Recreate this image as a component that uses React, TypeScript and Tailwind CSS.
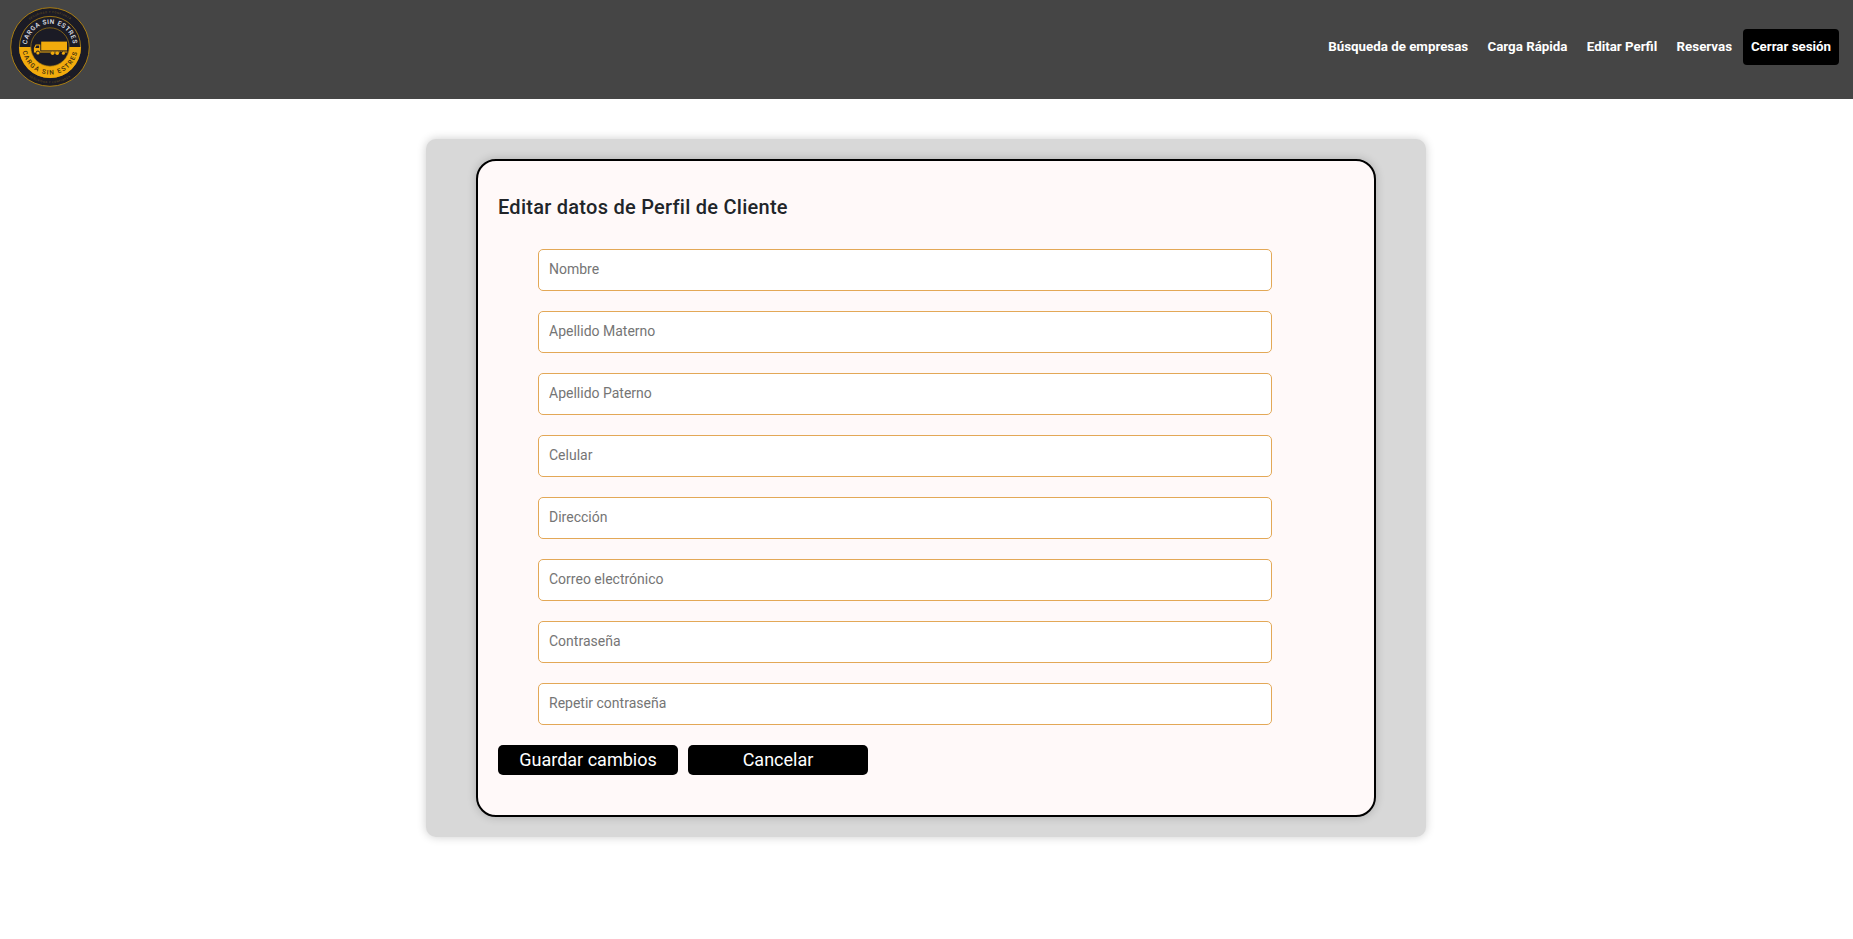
const fields = [
  { label: 'Nombre', type: 'text' },
  { label: 'Apellido Materno', type: 'text' },
  { label: 'Apellido Paterno', type: 'text' },
  { label: 'Celular', type: 'text' },
  { label: 'Dirección', type: 'text' },
  { label: 'Correo electrónico', type: 'email' },
  { label: 'Contraseña', type: 'password' },
  { label: 'Repetir contraseña', type: 'password' },
];

const links = ['Búsqueda de empresas', 'Carga Rápida', 'Editar Perfil', 'Reservas'];

function Logo() {
  return (
    <svg width="80" height="80" viewBox="0 0 80 80" className="block font-['Roboto',sans-serif]">
      <defs>
        <path id="top" d="M 16.8 40 A 23.2 23.2 0 0 1 63.2 40" />
        <path id="bottom" d="M 12.4 40 A 27.6 27.6 0 0 0 67.6 40" />
        <path id="rimTop" d="M 6 40 A 34 34 0 0 1 74 40" />
        <path id="rimBottom" d="M 3.8 40 A 36.2 36.2 0 0 0 76.2 40" />
      </defs>
      <circle cx="40" cy="40" r="39.3" fill="#1b1b25" stroke="#a87c12" strokeWidth="1" />
      <circle cx="40" cy="40" r="30.6" fill="#1b1b25" stroke="#b98a14" strokeWidth="0.8" />
      <path d="M 9 40 A 31 31 0 0 0 71 40 Z" fill="#f2ab0c" />
      <circle cx="40" cy="40" r="19.2" fill="#1b1b25" stroke="#a87c12" strokeWidth="0.7" />
      <g fill="#f2ab0c">
        <rect x="31.2" y="34.6" width="25.8" height="8.8" />
        <path d="M30.3 37.5h-4.6l-1.8 3.6v4.4h2a2 2 0 0 1 4 0h19.6a2 2 0 0 1 3.8 0h4v-1.1H30.3z" />
        <circle cx="27.9" cy="46" r="1.6" />
        <circle cx="42.6" cy="46.2" r="1.8" />
        <circle cx="47.2" cy="46.2" r="1.8" />
        <circle cx="53.4" cy="46.2" r="1.5" />
      </g>
      <path d="M26.4 38.6h2.7v2.4h-3.9z" fill="#1b1b25" />
      <g textAnchor="middle" fontWeight="500">
        <text fontSize="6.4" fill="#e3e6ef" letterSpacing="0.6">
          <textPath href="#top" startOffset="50%">CARGA SIN ESTRES</textPath>
        </text>
        <text fontSize="6.4" fill="#3a2c10" letterSpacing="1.3">
          <textPath href="#bottom" startOffset="50%">CARGA SIN ESTRES</textPath>
        </text>
      </g>
      <g textAnchor="middle" fontSize="2.8" fill="#73591c" letterSpacing="0.5">
        <text>
          <textPath href="#rimTop" startOffset="50%">SEGURIDAD Y CONFIANZA</textPath>
        </text>
        <text>
          <textPath href="#rimBottom" startOffset="50%">SEGURIDAD Y CONFIANZA</textPath>
        </text>
      </g>
    </svg>
  );
}

export default function App() {
  return (
    <div className="min-h-screen bg-white font-['Roboto',sans-serif]">
      <header className="flex h-[99px] items-start justify-between bg-[#454545] pl-[10px] pr-[14px]">
        <div className="pt-[7px]">
          <Logo />
        </div>
        <nav className="flex items-center pt-[29px] text-[13.333px] font-bold leading-[20px] text-white">
          <div className="mr-[11px] flex gap-[19.3px]">
            {links.map((l) => (
              <a key={l} href="#">{l}</a>
            ))}
          </div>
          <button className="h-9 w-24 rounded bg-black">Cerrar sesión</button>
        </nav>
      </header>

      <div className="flex justify-center pr-px pt-10">
        <main className="w-[1000px] rounded-[10px] bg-[#d8d8d8] py-5 shadow-[0_0_10px_rgba(0,0,0,0.2)]">
          <form className="mx-auto h-[658px] w-[900px] rounded-[20px] border-2 border-black bg-[#fff9f9] px-5 pt-[30px] shadow-[0_0_10px_rgba(0,0,0,0.2)]">
            <h2 className="mb-[26px] text-[20px] font-medium leading-[32px] tracking-[0.26px] text-[#212529]">
              Editar datos de Perfil de Cliente
            </h2>
            <div className="ml-10 flex w-[734px] flex-col gap-5">
              {fields.map((f) => (
                <input
                  key={f.label}
                  type={f.type}
                  placeholder={f.label}
                  className="h-[42px] rounded-[5px] border border-[#e3a857] bg-white px-[10px] pb-[3px] text-[14px] text-[#333] outline-none placeholder:text-[#757575]"
                />
              ))}
            </div>
            <div className="mt-5 flex gap-[10px] text-[18px] leading-[30px] text-white">
              <button type="submit" className="h-[30px] w-[180px] rounded-[5px] bg-black">Guardar cambios</button>
              <button type="button" className="h-[30px] w-[180px] rounded-[5px] bg-black">Cancelar</button>
            </div>
          </form>
        </main>
      </div>
    </div>
  );
}
